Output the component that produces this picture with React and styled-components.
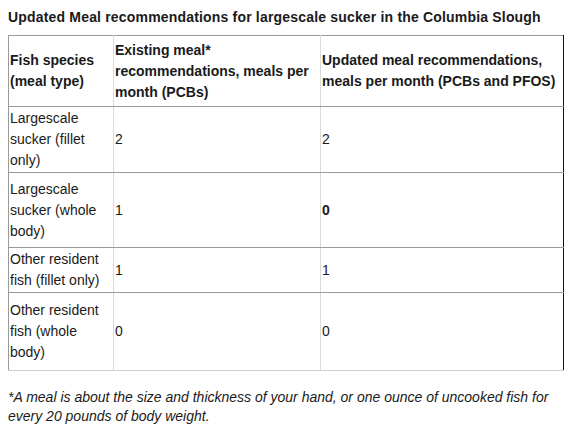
import React from "react";
import styled, { createGlobalStyle } from "styled-components";

const GlobalStyle = createGlobalStyle`
  body {
    margin: 0;
    background: #ffffff;
    font-family: "Liberation Sans", Arial, Helvetica, sans-serif;
    color: #1a1a1a;
  }
`;

const Page = styled.div`
  padding: 8px;
  width: 555px;
`;

const Title = styled.div`
  font-size: 14px;
  font-weight: bold;
  line-height: 19px;
  letter-spacing: 0.18px;
  margin-bottom: 8px;
`;

const Table = styled.table`
  width: 555px;
  table-layout: fixed;
  border-collapse: collapse;
  font-size: 14px;
  line-height: 21px;
  border-top: 1px solid #9a9a9a;
  border-left: 1px solid #9a9a9a;
`;

const Row = styled.tr`
  height: ${(props) => props.h}px;
`;

const Cell = styled.td`
  padding: 0 1px 0 1px;
  vertical-align: middle;
  border-bottom: 1px solid ${(props) => (props.last ? "#cfcfcf" : "#9a9a9a")};
  border-right: 1px solid ${(props) => (props.edge ? "#111" : "#dadada")};
  font-weight: ${(props) => (props.bold ? "bold" : "normal")};
`;

const HeadCell = styled(Cell).attrs({ as: "th" })`
  font-weight: bold;
  text-align: left;
`;

const Note = styled.p`
  margin: 17px 0 0 0;
  font-size: 14px;
  line-height: 19px;
  font-style: italic;
`;

const rows = [
  { h: 66, fish: "Largescale sucker (fillet only)", existing: "2", updated: "2" },
  { h: 75, fish: "Largescale sucker (whole body)", existing: "1", updated: "0", bold: true },
  { h: 45, fish: "Other resident fish (fillet only)", existing: "1", updated: "1" },
  { h: 78, fish: "Other resident fish (whole body)", existing: "0", updated: "0" },
];

export default function App() {
  return (
    <Page>
      <GlobalStyle />
      <Title>
        Updated Meal recommendations for largescale sucker in the Columbia Slough
      </Title>
      <Table>
        <colgroup>
          <col style={{ width: 105 }} />
          <col style={{ width: 207 }} />
          <col style={{ width: 243 }} />
        </colgroup>
        <thead>
          <Row h={71}>
            <HeadCell>Fish species (meal type)</HeadCell>
            <HeadCell>Existing meal* recommendations, meals per month (PCBs)</HeadCell>
            <HeadCell edge>Updated meal recommendations, meals per month (PCBs and PFOS)</HeadCell>
          </Row>
        </thead>
        <tbody>
          {rows.map((r, i) => {
            const last = i === rows.length - 1;
            return (
              <Row h={r.h} key={r.fish}>
                <Cell last={last}>{r.fish}</Cell>
                <Cell last={last}>{r.existing}</Cell>
                <Cell last={last} edge bold={r.bold}>
                  {r.updated}
                </Cell>
              </Row>
            );
          })}
        </tbody>
      </Table>
      <Note>
        *A meal is about the size and thickness of your hand, or one ounce of uncooked fish
        for every 20 pounds of body weight.
      </Note>
    </Page>
  );
}
